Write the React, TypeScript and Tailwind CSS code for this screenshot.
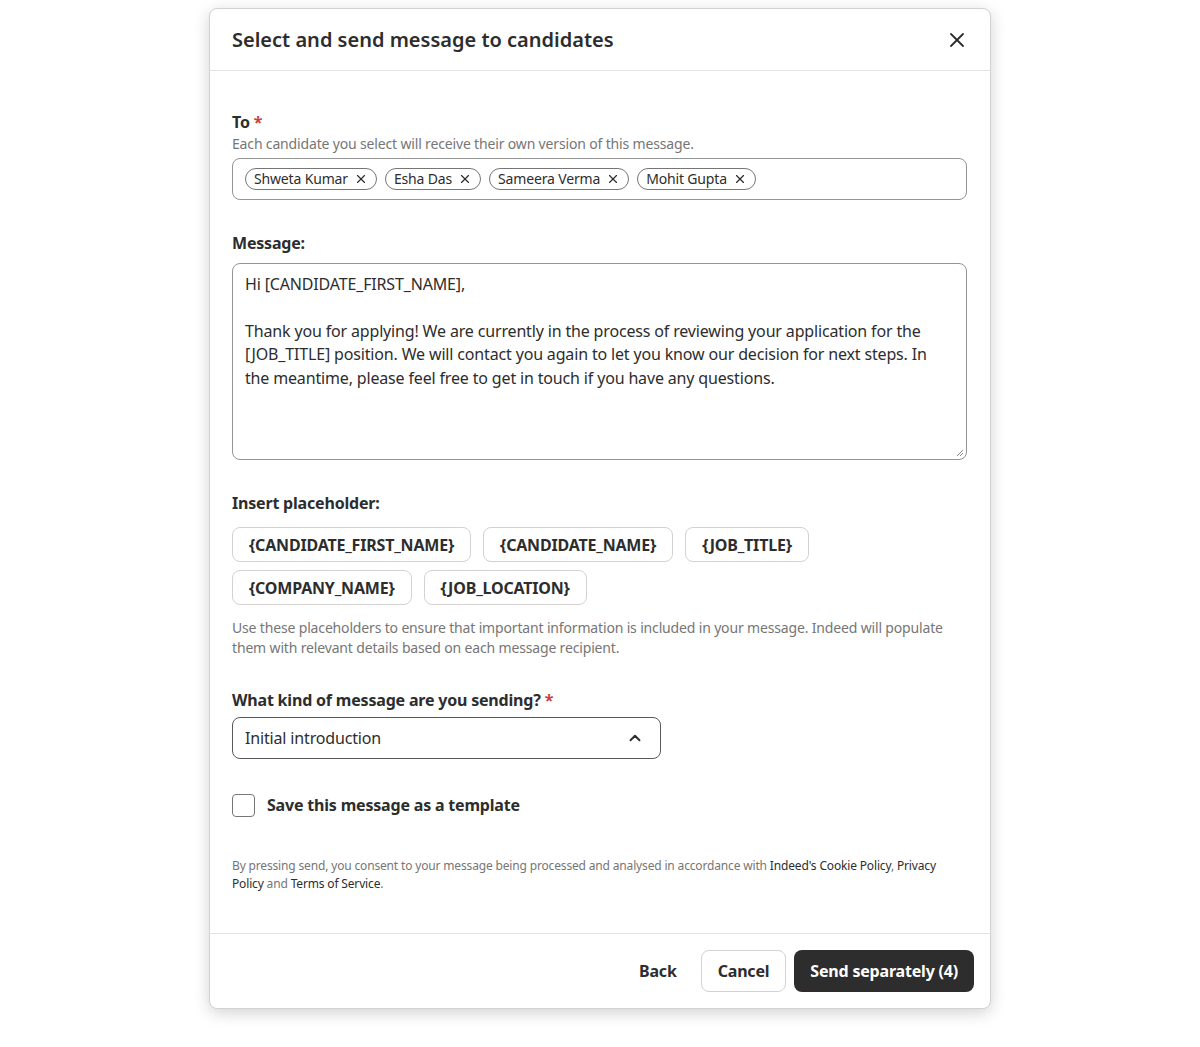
import { X, ChevronUp } from "lucide-react";

const chips = ["Shweta Kumar", "Esha Das", "Sameera Verma", "Mohit Gupta"];
const placeholders = [
  "{CANDIDATE_FIRST_NAME}",
  "{CANDIDATE_NAME}",
  "{JOB_TITLE}",
  "{COMPANY_NAME}",
  "{JOB_LOCATION}",
];

export default function App() {
  return (
    <div
      className="min-h-[1047px] bg-white pt-2 text-[#2d2d2d]"
      style={{ fontFamily: '"Noto Sans", "Open Sans", sans-serif' }}
    >
      <div className="mx-auto w-[782px] rounded-lg border border-[#d4d2d0] bg-white shadow-[0_4px_16px_rgba(0,0,0,0.18)]">
        <div className="flex h-[62px] items-center justify-between border-b border-[#e4e2e0] pl-[22px] pr-[21px]">
          <h2 className="text-[20px] font-semibold leading-7">Select and send message to candidates</h2>
          <X className="h-6 w-6" strokeWidth={1.8} />
        </div>

        <div className="border-b border-[#e4e2e0] pb-10 pl-[22px] pr-[23px] pt-[39px] tracking-[-0.01em]">
          <div className="text-[16px] font-bold leading-6 tracking-[-0.012em]">
            To <span className="text-[#c6423d]">*</span>
          </div>
          <p className="text-[14px] leading-5 text-[#767676]">
            Each candidate you select will receive their own version of this message.
          </p>
          <div className="mt-1 flex h-[42px] items-center gap-2 rounded-lg border border-[#949494] px-3">
            {chips.map((c) => (
              <span
                key={c}
                className="flex h-[22px] items-center gap-[6px] rounded-full border border-[#767676] pl-2 pr-[8px] text-[14px] leading-5"
              >
                {c}
                <X className="h-[14px] w-[14px]" strokeWidth={2} />
              </span>
            ))}
          </div>

          <div className="mt-[31px] text-[16px] font-bold leading-6 tracking-[-0.012em]">Message:</div>
          <div className="relative mt-2 h-[197px] rounded-lg border border-[#949494] py-[9px] pl-3 pr-4 text-[16px] leading-[23.5px]">
            <p>Hi [CANDIDATE_FIRST_NAME],</p>
            <p className="mt-[23px]">
              Thank you for applying! We are currently in the process of reviewing your application for the
              [JOB_TITLE] position. We will contact you again to let you know our decision for next steps. In
              the meantime, please feel free to get in touch if you have any questions.
            </p>
            <svg className="absolute bottom-[2px] right-[2px]" width="10" height="10" viewBox="0 0 10 10">
              <path d="M9 3 L3 9 M9 6 L6 9" stroke="#8c8c8c" strokeWidth="1" />
            </svg>
          </div>

          <div className="mt-[31px] text-[16px] font-bold leading-6 tracking-[-0.012em]">Insert placeholder:</div>
          <div className="mt-3 flex w-[600px] flex-wrap gap-x-3 gap-y-2 tracking-[-0.012em]">
            {placeholders.map((p) => (
              <button
                key={p}
                className="h-[35px] rounded-lg border border-[#d4d2d0] px-4 text-[16px] font-bold leading-6"
              >
                {p}
              </button>
            ))}
          </div>
          <p className="mt-[13px] text-[14px] leading-5 text-[#767676]">
            Use these placeholders to ensure that important information is included in your message. Indeed will populate
            them with relevant details based on each message recipient.
          </p>

          <div className="mt-[30px] text-[16px] font-bold leading-6 tracking-[-0.012em]">
            What kind of message are you sending? <span className="text-[#c6423d]">*</span>
          </div>
          <div className="mt-[5px] flex h-[42px] w-[429px] items-center justify-between rounded-lg border border-[#595959] pl-3 pr-4 text-[16px]">
            <span>Initial introduction</span>
            <ChevronUp className="h-[18px] w-[18px]" strokeWidth={2.5} />
          </div>

          <label className="mt-[34px] flex items-center gap-3 text-[16px] font-bold leading-6 tracking-[-0.012em]">
            <span className="h-[23px] w-[23px] rounded border border-[#767676]" />
            Save this message as a template
          </label>

          <p className="mt-10 max-w-[720px] text-[12px] leading-[18px] text-[#767676]">
            By pressing send, you consent to your message being processed and analysed in accordance with{" "}
            <span className="text-[#2d2d2d]">Indeed's Cookie Policy</span>,{" "}
            <span className="text-[#2d2d2d]">Privacy Policy</span> and{" "}
            <span className="text-[#2d2d2d]">Terms of Service</span>.
          </p>
        </div>

        <div className="flex items-center justify-end gap-2 px-4 py-4 tracking-[-0.012em]">
          <button className="h-[42px] px-4 text-[16px] font-bold">Back</button>
          <button className="h-[42px] rounded-lg border border-[#d4d2d0] px-4 text-[16px] font-bold">Cancel</button>
          <button className="h-[42px] rounded-lg bg-[#2d2d2d] px-4 text-[16px] font-bold text-white">
            Send separately (4)
          </button>
        </div>
      </div>
    </div>
  );
}
